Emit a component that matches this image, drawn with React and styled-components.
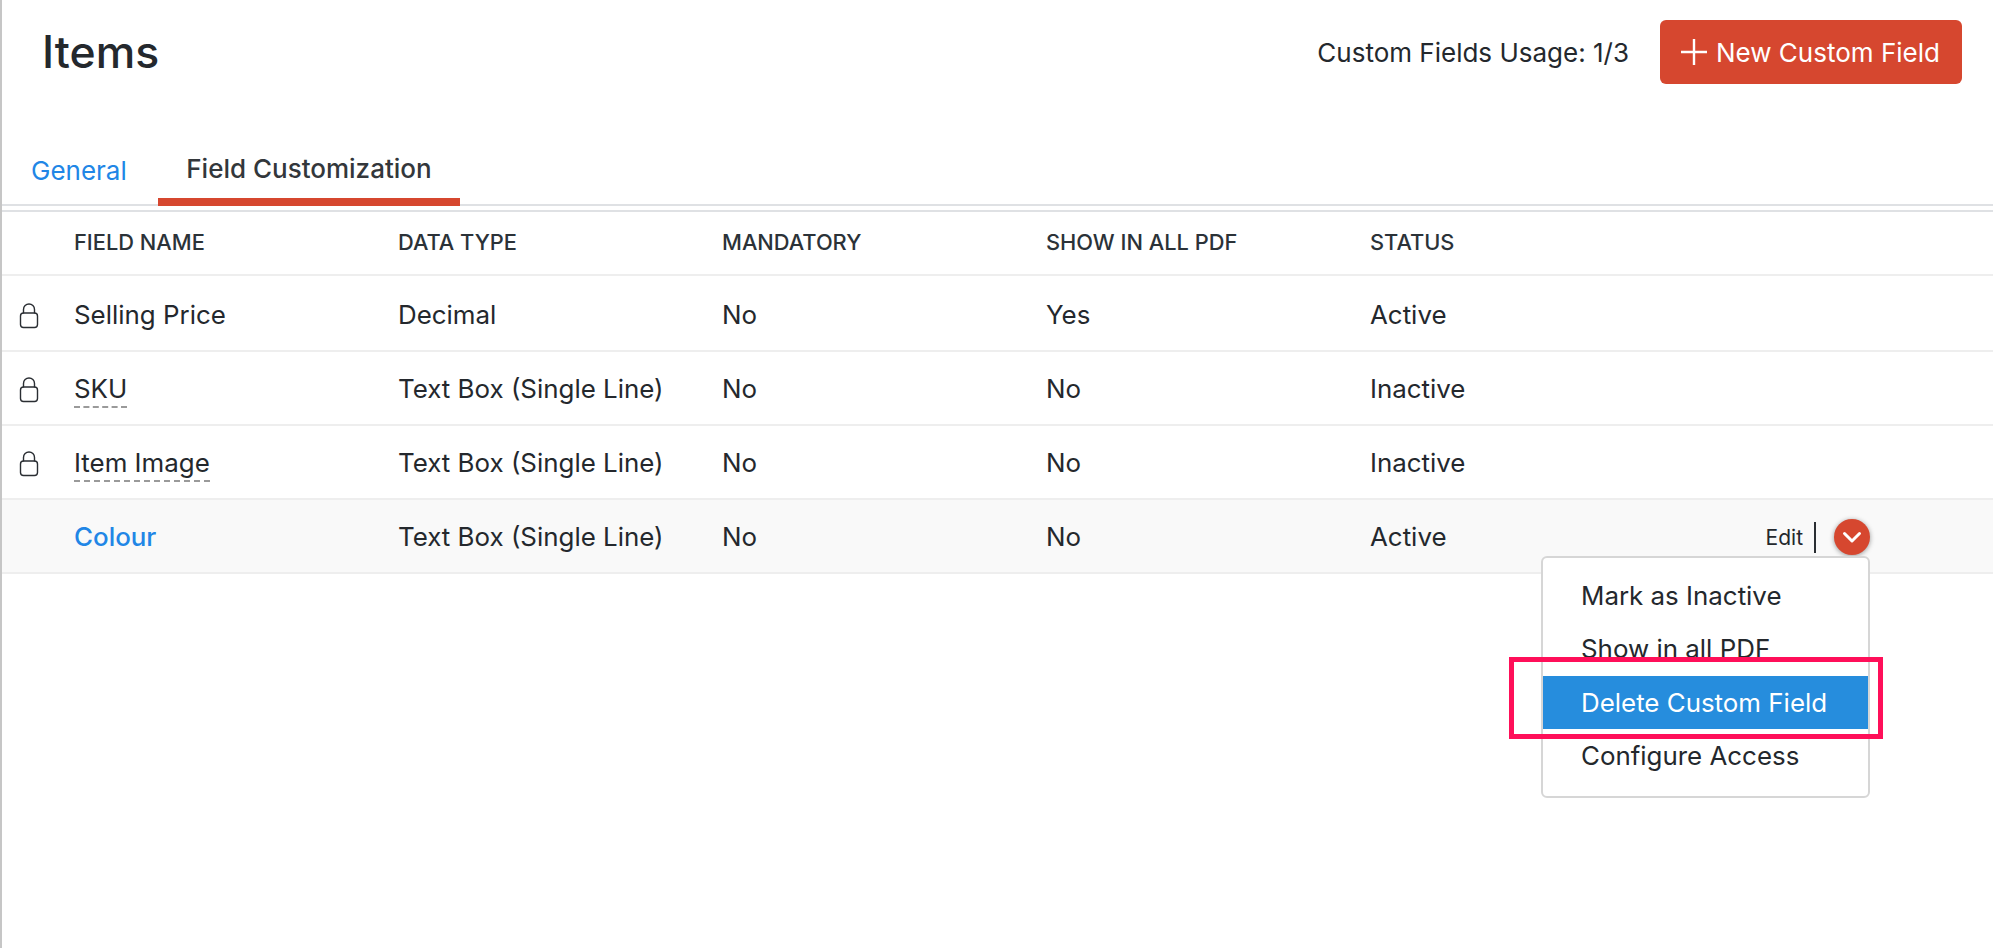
import React from "react";
import styled, { createGlobalStyle } from "styled-components";

const rows = [
  { name: "Selling Price", type: "Decimal", mandatory: "No", pdf: "Yes", status: "Active", locked: true },
  { name: "SKU", type: "Text Box (Single Line)", mandatory: "No", pdf: "No", status: "Inactive", locked: true, hint: true },
  { name: "Item Image", type: "Text Box (Single Line)", mandatory: "No", pdf: "No", status: "Inactive", locked: true, hint: true },
  { name: "Colour", type: "Text Box (Single Line)", mandatory: "No", pdf: "No", status: "Active", custom: true },
];

const menuItems = ["Mark as Inactive", "Show in all PDF", "Delete Custom Field", "Configure Access"];

function LockIcon() {
  return (
    <svg width="20" height="26" viewBox="0 0 20 26" fill="none" stroke="#2a2e33" strokeWidth="1.4">
      <path d="M4.5 10.5V6.5a5.5 5.5 0 0 1 11 0v4" />
      <rect x="1.5" y="10" width="17" height="14.5" rx="3" />
    </svg>
  );
}

function App() {
  return (
    <Page>
      <GlobalStyle />
      <Header>
        <Title>Items</Title>
        <HeaderActions>
          <Usage>Custom Fields Usage: 1/3</Usage>
          <PrimaryButton>
            <svg width="28" height="28" viewBox="0 0 28 28" stroke="#fff" strokeWidth="2.4">
              <path d="M14 1v26M1 14h26" />
            </svg>
            New Custom Field
          </PrimaryButton>
        </HeaderActions>
      </Header>

      <Tabs>
        <Tab>General</Tab>
        <Tab $active>Field Customization</Tab>
      </Tabs>

      <HeadRow>
        <span />
        <span>Field Name</span>
        <span>Data Type</span>
        <span>Mandatory</span>
        <span>Show in all PDF</span>
        <span>Status</span>
      </HeadRow>

      {rows.map((row) => (
        <Row key={row.name} $hover={row.custom}>
          <LockCell>{row.locked && <LockIcon />}</LockCell>
          <span>
            <FieldName $link={row.custom} $hint={row.hint}>{row.name}</FieldName>
          </span>
          <span>{row.type}</span>
          <span>{row.mandatory}</span>
          <span>{row.pdf}</span>
          <span>{row.status}</span>
          {row.custom && (
            <RowActions>
              <EditLink>Edit</EditLink>
              <ActionDivider />
              <MoreButton>
                <svg width="20" height="13" viewBox="0 0 20 13" fill="none" stroke="#fff" strokeWidth="3" strokeLinecap="round" strokeLinejoin="round">
                  <path d="M2.5 2.5 10 10l7.5-7.5" />
                </svg>
              </MoreButton>
              <Menu>
                {menuItems.map((item) => (
                  <MenuItem key={item} $active={item === "Delete Custom Field"}>{item}</MenuItem>
                ))}
                <Callout />
              </Menu>
            </RowActions>
          )}
        </Row>
      ))}
    </Page>
  );
}

const GlobalStyle = createGlobalStyle`
  html, body {
    margin: 0;
    padding: 0;
    background: #fff;
  }
  * {
    box-sizing: border-box;
  }
`;

const Page = styled.div`
  height: 948px;
  overflow: hidden;
  border-left: 2px solid #c6c6c6;
  font-family: Inter, "Liberation Sans", sans-serif;
  font-size: 25.9px;
  color: #24282d;
`;

const Header = styled.header`
  display: flex;
  justify-content: space-between;
  align-items: center;
  height: 104px;
  padding: 0 31px 0 40px;
`;

const Title = styled.h1`
  margin: 0;
  font-size: 44.5px;
  font-weight: 500;
`;

const HeaderActions = styled.div`
  display: flex;
  align-items: center;
  gap: 31px;
`;

const Usage = styled.span`
  font-size: 26px;
`;

const PrimaryButton = styled.button`
  display: flex;
  align-items: center;
  gap: 8px;
  height: 64px;
  width: 302px;
  padding: 0 0 0 20px;
  border: 0;
  border-radius: 6px;
  background: #d6472f;
  color: #fff;
  font: inherit;
  font-size: 26px;
`;

const Tabs = styled.nav`
  display: flex;
  height: 102px;
  padding: 42px 0 0 4px;
  border-bottom: 2px solid #dfe1e4;
`;

const Tab = styled.a`
  height: 60px;
  padding: ${(p) => (p.$active ? "7px 28.5px 0" : "9px 0 0 25px")};
  margin-right: ${(p) => (p.$active ? 0 : "31px")};
  border-bottom: ${(p) => (p.$active ? "8px solid #d6472f" : "0")};
  color: ${(p) => (p.$active ? "#33373b" : "#2186e6")};
  font-size: 26px;
  font-weight: ${(p) => (p.$active ? 500 : 400)};
`;

const columns = "72px 324px 324px 324px 324px 1fr";

const HeadRow = styled.div`
  display: grid;
  grid-template-columns: ${columns};
  align-items: center;
  height: 66px;
  margin: 4px 0 2px;
  padding-bottom: 2px;
  border-top: 2px solid #dfe1e4;
  border-bottom: 2px solid #eeeeee;
  font-size: 21.8px;
  font-weight: 500;
  text-transform: uppercase;
  color: #2b3238;
`;

const Row = styled.div`
  position: relative;
  display: grid;
  grid-template-columns: ${columns};
  align-items: center;
  height: 74px;
  padding-top: 1px;
  border-bottom: 2px solid #eeeeee;
  background: ${(p) => (p.$hover ? "#f9f9f9" : "#fff")};
`;

const LockCell = styled.span`
  display: flex;
  padding: 2px 0 0 17px;
`;

const FieldName = styled.span`
  display: inline-block;
  color: ${(p) => (p.$link ? "#2186e6" : "inherit")};
  font-weight: ${(p) => (p.$link ? 500 : 400)};
  border-bottom: ${(p) => (p.$hint ? "2px dashed #9a9a9a" : "0")};
  padding-bottom: ${(p) => (p.$hint ? "2px" : "0")};
  margin-top: ${(p) => (p.$hint ? "4px" : "0")};
`;

const RowActions = styled.div`
  position: absolute;
  top: 19px;
  right: 123px;
  display: flex;
  align-items: center;
`;

const EditLink = styled.span`
  font-size: 21px;
`;

const ActionDivider = styled.span`
  width: 2px;
  height: 31px;
  margin: 0 18px 0 11px;
  background: #2a2e33;
`;

const MoreButton = styled.span`
  display: flex;
  align-items: center;
  justify-content: center;
  width: 36px;
  height: 36px;
  border-radius: 50%;
  background: #d6472f;
  box-shadow: 0 1px 5px rgba(0, 0, 0, 0.4);
`;

const Menu = styled.div`
  position: absolute;
  top: 37px;
  right: 0;
  width: 329px;
  height: 242px;
  padding: 11px 0;
  background: #fff;
  border: 2px solid #d6d6d6;
  border-radius: 6px;
  z-index: 2;
`;

const MenuItem = styled.div`
  display: flex;
  align-items: center;
  height: 53.3px;
  padding-left: 38px;
  background: ${(p) => (p.$active ? "#268ddd" : "transparent")};
  color: ${(p) => (p.$active ? "#fff" : "inherit")};
`;

const Callout = styled.div`
  position: absolute;
  top: 99px;
  left: -34px;
  width: 374px;
  height: 82px;
  border: 5px solid #ff0f59;
`;

export default App;
